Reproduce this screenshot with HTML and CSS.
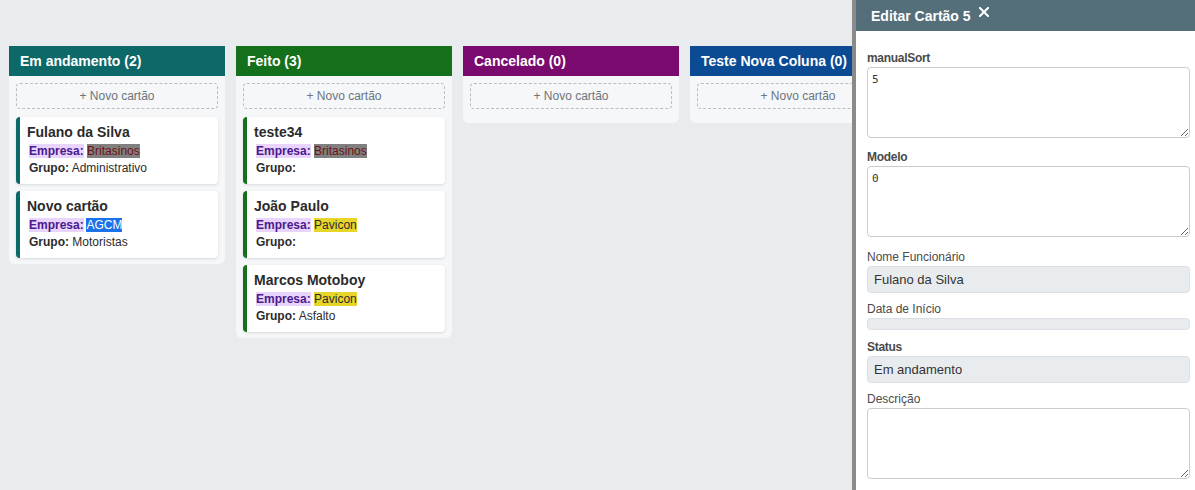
FILE: index.html
```html
<!DOCTYPE html>
<html lang="pt-BR">
<head>
<meta charset="utf-8">
<title>Kanban</title>
<link rel="stylesheet" href="styles.css">
</head>
<body>
<div class="board">
  <section class="column">
    <header class="col-head teal">Em andamento (2)</header>
    <div class="col-body">
      <button class="add-btn">+ Novo cartão</button>
      <article class="card bd-teal">
        <h3 class="card-title">Fulano da Silva</h3>
        <div class="card-line"><span class="tag-label">Empresa:</span> <span class="val-gray">Britasinos</span></div>
        <div class="card-line"><b>Grupo:</b> Administrativo</div>
      </article>
      <article class="card bd-teal">
        <h3 class="card-title">Novo cartão</h3>
        <div class="card-line"><span class="tag-label">Empresa:</span> <span class="val-blue">AGCM</span></div>
        <div class="card-line"><b>Grupo:</b> Motoristas</div>
      </article>
    </div>
  </section>
  <section class="column">
    <header class="col-head green">Feito (3)</header>
    <div class="col-body">
      <button class="add-btn">+ Novo cartão</button>
      <article class="card bd-green">
        <h3 class="card-title">teste34</h3>
        <div class="card-line"><span class="tag-label">Empresa:</span> <span class="val-gray">Britasinos</span></div>
        <div class="card-line"><b>Grupo:</b></div>
      </article>
      <article class="card bd-green">
        <h3 class="card-title">João Paulo</h3>
        <div class="card-line"><span class="tag-label">Empresa:</span> <span class="val-yellow">Pavicon</span></div>
        <div class="card-line"><b>Grupo:</b></div>
      </article>
      <article class="card bd-green">
        <h3 class="card-title">Marcos Motoboy</h3>
        <div class="card-line"><span class="tag-label">Empresa:</span> <span class="val-yellow">Pavicon</span></div>
        <div class="card-line"><b>Grupo:</b> Asfalto</div>
      </article>
    </div>
  </section>
  <section class="column">
    <header class="col-head purple">Cancelado (0)</header>
    <div class="col-body">
      <button class="add-btn">+ Novo cartão</button>
    </div>
  </section>
  <section class="column">
    <header class="col-head blue">Teste Nova Coluna (0)</header>
    <div class="col-body">
      <button class="add-btn">+ Novo cartão</button>
    </div>
  </section>
</div>

<aside class="panel">
  <div class="panel-head">
    <span class="panel-title">Editar Cartão 5</span>
    <button class="close-btn" aria-label="Fechar">
      <svg width="10" height="10" viewBox="0 0 10 10"><path d="M1 1 L9 9 M9 1 L1 9" stroke="#fff" stroke-width="2" stroke-linecap="square" fill="none"/></svg>
    </button>
  </div>
  <div class="panel-body">
    <div class="field">
      <label class="lbl strong">manualSort</label>
      <textarea class="ta">5</textarea>
    </div>
    <div class="field wide">
      <label class="lbl strong">Modelo</label>
      <textarea class="ta">0</textarea>
    </div>
    <div class="field short">
      <label class="lbl">Nome Funcionário</label>
      <div class="ro">Fulano da Silva</div>
    </div>
    <div class="field short wide">
      <label class="lbl">Data de Início</label>
      <div class="ro empty"></div>
    </div>
    <div class="field short">
      <label class="lbl strong">Status</label>
      <div class="ro">Em andamento</div>
    </div>
    <div class="field">
      <label class="lbl">Descrição</label>
      <textarea class="ta"></textarea>
    </div>
  </div>
</aside>
</body>
</html>
```
FILE: styles.css
```css
* { box-sizing: border-box; }
html, body { margin: 0; height: 100%; }
body {
  background: #e9ecef;
  font-family: "Liberation Sans", Arial, sans-serif;
  color: #333;
  overflow: hidden;
}
.board {
  display: flex;
  align-items: flex-start;
  gap: 11px;
  padding: 46px 0 0 9px;
}
.column {
  width: 216px;
  flex-shrink: 0;
  background: #f5f7f9;
  border-radius: 0 0 6px 6px;
  overflow: hidden;
}
.col-head {
  height: 30px;
  line-height: 30px;
  padding: 0 11px;
  color: #fff;
  font-weight: bold;
  font-size: 14px;
  white-space: nowrap;
}
.teal { background: #0d6868; }
.green { background: #14701a; }
.purple { background: #7a0a6e; }
.blue { background: #0a4b94; }
.col-body {
  padding: 7px 7px 6px;
  display: flex;
  flex-direction: column;
}
.add-btn {
  height: 26px;
  border: 1px dashed #bdbdbd;
  border-radius: 4px;
  background: transparent;
  color: #6c757d;
  font-family: inherit;
  font-size: 12px;
  margin: 0 0 8px;
}
.card {
  background: #fff;
  border-radius: 4px;
  border-left: 4px solid;
  box-shadow: 0 1px 3px rgba(0,0,0,0.13);
  padding: 6px 8px 7px 7px;
}
.card + .card { margin-top: 7px; }
.bd-teal { border-left-color: #0d6868; }
.bd-green { border-left-color: #14701a; }
.card-title {
  margin: 0 0 2px;
  font-size: 14px;
  line-height: 18px;
  font-weight: bold;
  color: #2b2b2b;
}
.card-line {
  font-size: 12px;
  line-height: 17px;
  padding-left: 2px;
  color: #2b2b2b;
}
.card-line b { font-weight: bold; }
.tag-label {
  background: #e8d4fc;
  color: #4b1a8c;
  font-weight: bold;
}
.val-gray { background: #808080; color: #6e1212; }
.val-blue { background: #1a73e8; color: #fff; }
.val-yellow { background: #e8d52a; color: #2b2b2b; }

.panel {
  position: fixed;
  top: 0;
  right: 0;
  bottom: 0;
  width: 343px;
  background: #fff;
  border-left: 4px solid #8a8a8a;
}
.panel-head {
  height: 31px;
  background: #546e7a;
  display: flex;
  align-items: center;
  padding-left: 15px;
}
.panel-title {
  color: #fff;
  font-weight: bold;
  font-size: 14px;
}
.close-btn {
  border: 0;
  background: none;
  padding: 0;
  margin: 0 0 8px 8px;
  display: flex;
  cursor: pointer;
}
.panel-body {
  padding: 20px 5px 0 11px;
}
.field { margin-bottom: 12px; }
.field.wide { margin-bottom: 13px; }
.field.short { margin-bottom: 9px; }
.field.short.wide { margin-bottom: 10px; }
.lbl {
  display: block;
  font-size: 12px;
  line-height: 14px;
  margin-bottom: 2px;
  color: #4a4a4a;
}
.lbl.strong { font-weight: bold; letter-spacing: -0.3px; }
.ta {
  display: block;
  width: 100%;
  height: 71px;
  border: 1px solid #ccc;
  border-radius: 4px;
  padding: 5px 4px;
  font-family: "DejaVu Sans Mono", "Liberation Mono", monospace;
  font-size: 11px;
  color: #333;
  background: #fff;
  margin: 0;
}
.ro {
  background: #e9ecef;
  border: 1px solid #dcdfe3;
  border-radius: 4px;
  padding: 5px 6px;
  font-size: 13px;
  line-height: 15px;
  color: #333;
}
.ro.empty { height: 12px; padding: 0; }
```
